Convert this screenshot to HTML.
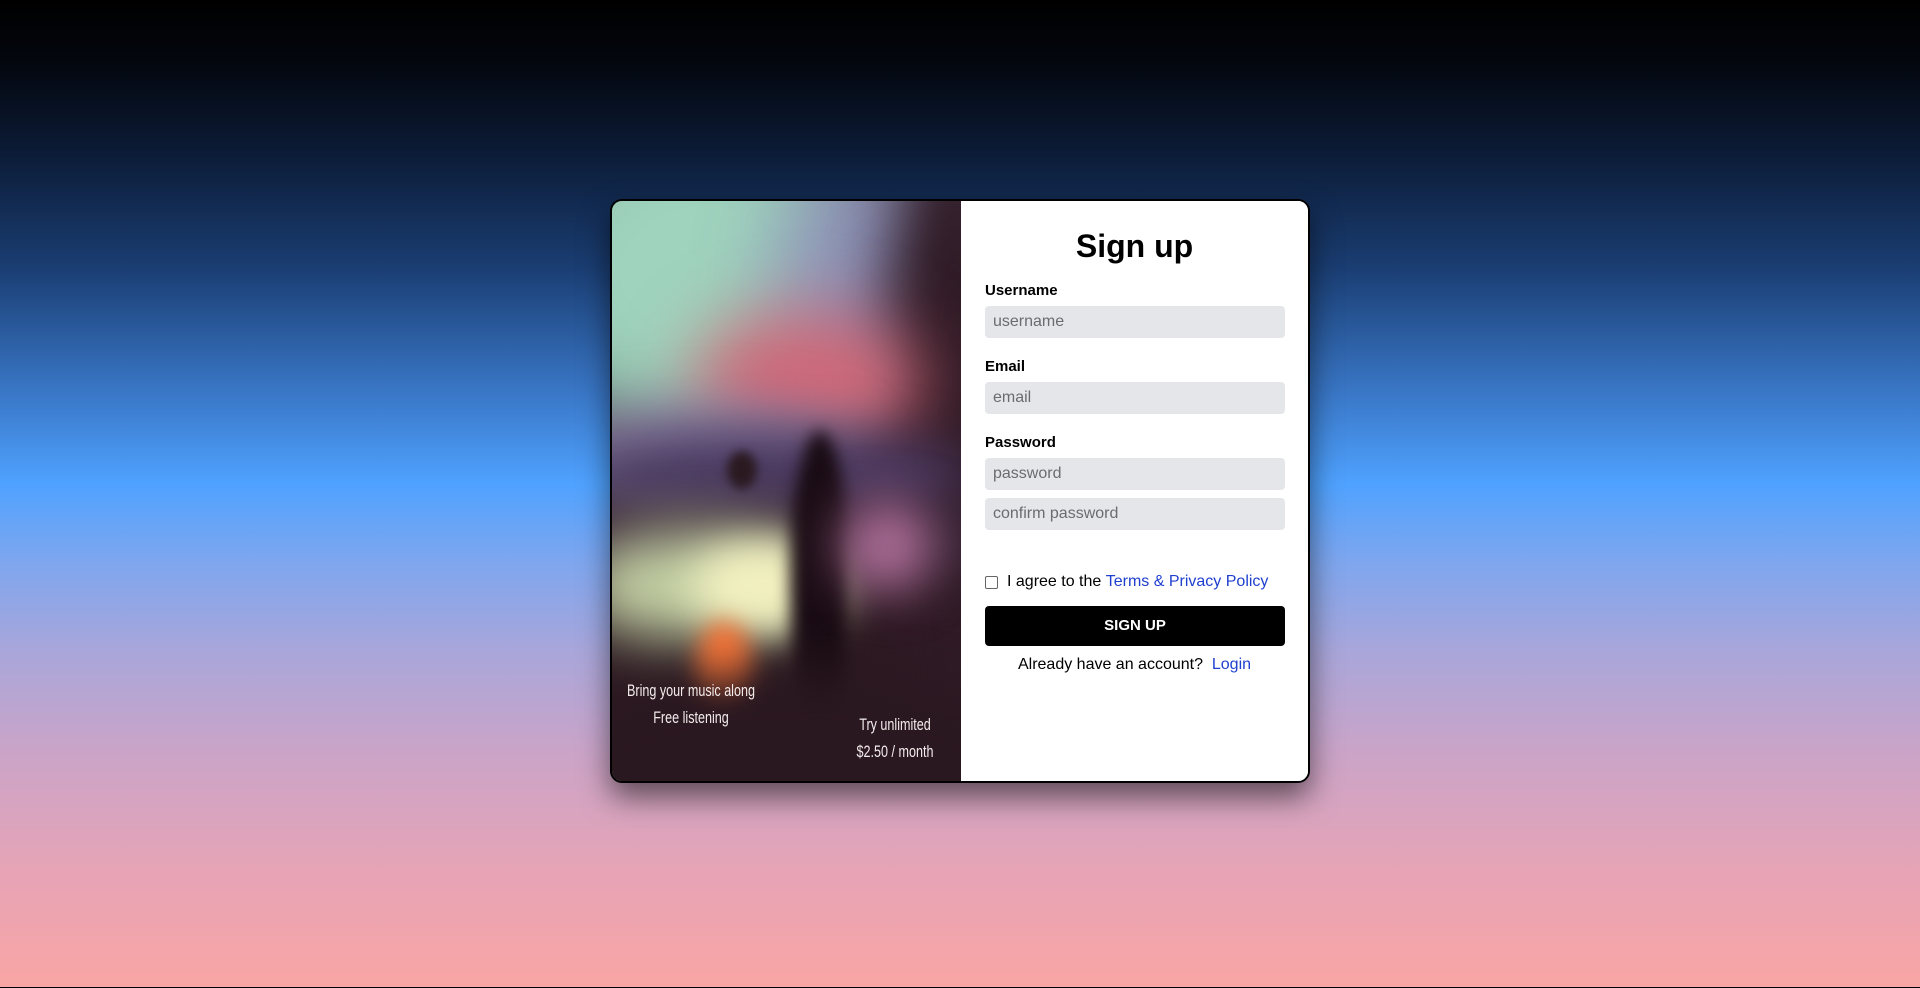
<!DOCTYPE html>
<html><head><meta charset="utf-8"><style>
*{box-sizing:border-box;margin:0;padding:0}
html,body{width:1920px;height:988px;overflow:hidden}
body{background:linear-gradient(180deg,#000 0%,#03060d 6%,#0b1a34 15%,#1a3d72 27%,#3a78c8 40%,#4fa2ff 49%,#7fa6ee 57%,#a9a6da 66%,#caa4c8 76%,#e6a4b6 88%,#f9a5a4 100%);font-family:"Liberation Sans",sans-serif;position:relative;border-bottom:1px solid #000}
.card{position:absolute;left:610px;top:199px;width:700px;height:584px;border:2px solid #000;border-radius:12px;overflow:hidden;background:#fff;box-shadow:0 14px 30px rgba(0,0,0,.55)}
.img{position:absolute;left:0;top:0;width:349px;height:100%;overflow:hidden;background:#2d1a22}
.img div{position:absolute;border-radius:50%}
.img .t{position:absolute;color:#f4ecec;font-size:17px;transform:scaleX(.74);white-space:nowrap;text-align:center;width:200px;margin-left:-100px}
.form{position:absolute;left:349px;top:0;right:0;bottom:0;background:#fff}
h1{position:absolute;left:0;right:0;top:27px;text-align:center;font-size:32px;font-weight:bold;font-family:"Liberation Sans",sans-serif}
.lbl{position:absolute;left:24px;font-weight:bold;font-size:15px}
.in{position:absolute;left:24px;width:300px;height:32px;background:#e5e6ea;border-radius:4px;color:#6b6b70;font-size:16px;padding:7px 8px;line-height:18px}
.row{position:absolute;left:24px;top:372px;font-size:16px;display:flex;align-items:center}
.cb{width:13px;height:13px;border:1px solid #666;border-radius:2px;margin-right:9px}
a{color:#1f3fd0;text-decoration:none}
.btn{position:absolute;left:24px;top:405px;width:300px;height:40px;background:#000;color:#fff;font-weight:bold;border-radius:4px;text-align:center;line-height:40px;font-size:15px}
.al{position:absolute;left:0;right:0;top:455px;text-align:center;font-size:16px}
</style></head><body>
<div class="card">
 <div class="img">
  <div style="left:-120px;top:-120px;width:420px;height:380px;background:#9fd3bd;filter:blur(50px)"></div>
  <div style="left:160px;top:-60px;width:200px;height:300px;background:#8c86b8;filter:blur(40px);opacity:.8"></div>
  <div style="left:260px;top:-60px;width:160px;height:700px;background:#2f1a25;filter:blur(30px)"></div>
  <div style="left:80px;top:110px;width:230px;height:140px;background:#d06878;filter:blur(35px)"></div>
  <div style="left:-60px;top:210px;width:300px;height:90px;background:#8f7fa8;filter:blur(30px)"></div>
  <div style="left:-40px;top:230px;width:400px;height:90px;background:#4a3a62;filter:blur(25px)"></div>
  <div style="left:-60px;top:300px;width:450px;height:80px;background:#3a2638;filter:blur(25px)"></div>
  <div style="left:-40px;top:330px;width:260px;height:110px;background:#c8d6a8;filter:blur(30px)"></div>
  <div style="left:80px;top:340px;width:150px;height:90px;background:#f2f0c0;filter:blur(20px)"></div>
  <div style="left:85px;top:420px;width:55px;height:90px;background:#ff7a3a;filter:blur(12px)"></div>
  <div style="left:178px;top:230px;width:60px;height:300px;background:#1a0c14;filter:blur(8px)"></div>
  <div style="left:230px;top:300px;width:90px;height:90px;background:#b06f9a;filter:blur(25px)"></div>
  <div style="left:-60px;top:470px;width:480px;height:200px;background:#2a1820;filter:blur(25px)"></div>
  <div style="left:115px;top:250px;width:30px;height:38px;background:#2a1a20;filter:blur(5px)"></div>
  <span class="t" style="left:79px;top:480px">Bring your music along</span>
  <span class="t" style="left:79px;top:507px">Free listening</span>
  <span class="t" style="left:283px;top:514px">Try unlimited</span>
  <span class="t" style="left:283px;top:541px">$2.50 / month</span>
 </div>
 <div class="form">
  <h1>Sign up</h1>
  <div class="lbl" style="top:81px">Username</div>
  <div class="in" style="top:105px">username</div>
  <div class="lbl" style="top:157px">Email</div>
  <div class="in" style="top:181px">email</div>
  <div class="lbl" style="top:233px">Password</div>
  <div class="in" style="top:257px">password</div>
  <div class="in" style="top:297px">confirm password</div>
  <div class="row"><span class="cb"></span>I agree to the&nbsp; <a>Terms &amp; Privacy Policy</a></div>
  <div class="btn">SIGN UP</div>
  <div class="al">Already have an account?&nbsp; <a>Login</a></div>
 </div>
</div>
</body></html>
